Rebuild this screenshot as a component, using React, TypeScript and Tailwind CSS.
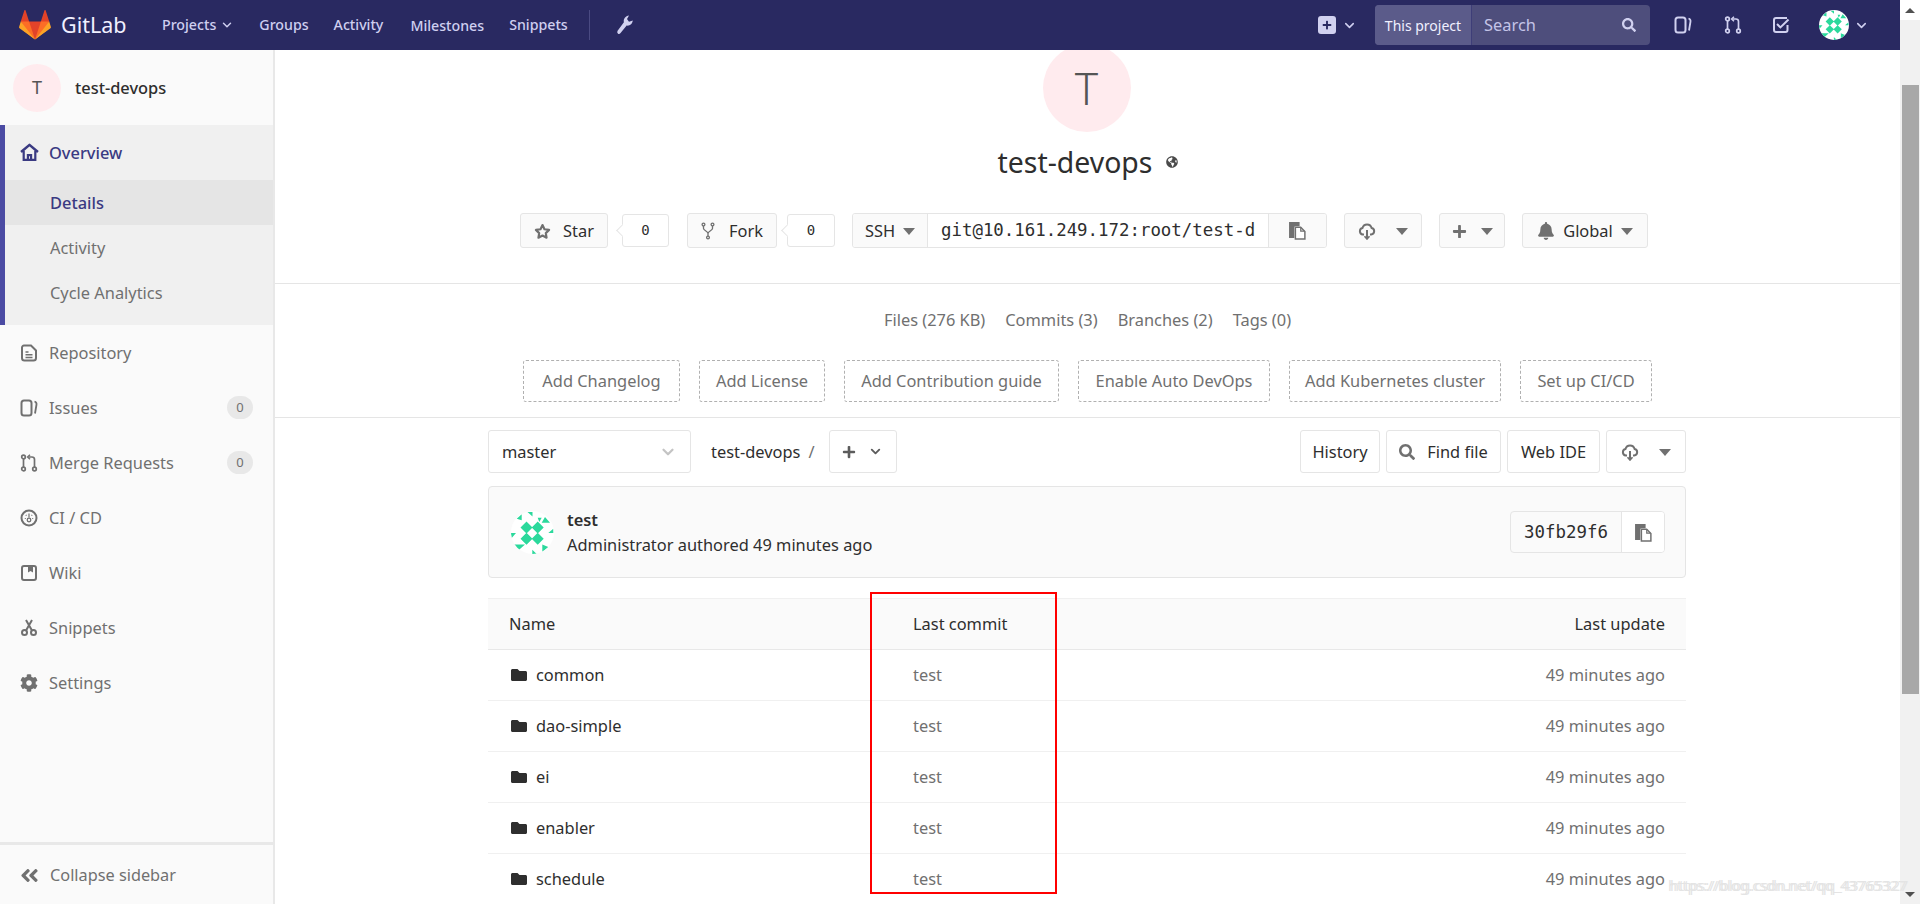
import { ReactNode } from 'react';
import { ChevronDown } from 'lucide-react';
import { FaAngleDoubleLeft, FaBell, FaCog, FaFolder, FaGlobeAmericas, FaPlus, FaSearch } from 'react-icons/fa';

const fontSans = "font-['Noto_Sans',sans-serif]";
const fontMono = "font-['DejaVu_Sans_Mono',monospace]";

const GitlabLogo = () => (
	<svg width="32" height="32" viewBox="0 0 36 36">
		<path fill="#e24329" d="m2 14 9.38 9v-9l-4-12.28c-.205-.632-1.176-.632-1.38 0z" />
		<path fill="#e24329" d="m34 14-9.38 9v-9l4-12.28c.205-.632 1.176-.632 1.38 0z" />
		<path fill="#e24329" d="M18 34.38 3 14h30z" />
		<path fill="#fc6d26" d="M18 34.38 11.38 14H2l4 11z" />
		<path fill="#fc6d26" d="M18 34.38 24.62 14H34l-4 11z" />
		<path fill="#fca326" d="M2 14 .1 20.16c-.18.565 0 1.2.5 1.56l17.42 12.66z" />
		<path fill="#fca326" d="m34 14 1.9 6.16c.18.565 0 1.2-.5 1.56L18 34.38z" />
	</svg>
);

const Identicon = ({ size }: { size: number }) => (
	<svg width={size} height={size} viewBox="0 0 43 43" className="shrink-0 rounded-full bg-white">
		<g fill="#2bd99c">
			<path d="M15.500 10.500l6 6-6 6-6-6zM26.700 10.500l6 6-6 6-6-6zM15.500 21.700l6 6-6 6-6-6zM26.700 21.700l6 6-6 6-6-6z" />
			<path d="M16.500 1h5v4.500zM5.700 7.700l5-4.400v6zM30.700 11.700 34 6l5 5.700zM26.700 6.700h4l-2.400 4.300zM37.300 22l5-4.300V22zM-.3 22H5l-4.300 5zM3 33.400h11l-6.700 6zM21.300 38.700V43h4.400zM31.300 33.400l6 2.600-6 5z" />
		</g>
	</svg>
);

const WrenchIcon = () => (
	<svg viewBox="0 0 18 18" width="20" height="20" fill="#d1d1f0">
		<path d="M3 17q-1.500-.8-.8-2.700L8 6.500C7.400 3.500 9.500.8 12.600.5L10.800 3.600 12.600 6l3.400-1c-.3 3-2.800 5-5.500 4.500L5 16.300Q4 17.500 3 17z" />
	</svg>
);

const IssuesIcon = ({ className }: { className?: string }) => (
	<svg viewBox="0 0 18 18" width="18" height="18" className={className} fill="none" stroke="currentColor" strokeWidth="2">
		<rect x="1.500" y="1.500" width="10" height="15" rx="2.500" />
		<path d="M14.500 2.500c2 .6 2.200 1.500 2 3l-1.500 9" strokeWidth="1.800" />
	</svg>
);

const MergeIcon = ({ className }: { className?: string }) => (
	<svg viewBox="0 0 18 18" width="18" height="18" className={className} fill="none" stroke="currentColor" strokeWidth="1.700">
		<circle cx="3.500" cy="3" r="1.800" />
		<circle cx="3.500" cy="15" r="1.800" />
		<circle cx="14.500" cy="15" r="1.800" />
		<path d="M3.500 5v8M14.500 13V5.500c0-1.500-1-2.500-2.500-2.500H9" />
		<path d="M10 .8 7.600 3 10 5.200" strokeWidth="1.500" />
	</svg>
);

const TodoIcon = () => (
	<svg viewBox="0 0 18 18" width="18" height="18" fill="none" stroke="currentColor" strokeWidth="2">
		<path d="M15.500 9v5a2 2 0 0 1-2 2H4a2 2 0 0 1-2-2V4a2 2 0 0 1 2-2h11" />
		<path d="M5 8l3.400 3.400L16.500 3.500" />
	</svg>
);

const RepoIcon = () => (
	<svg viewBox="0 0 18 18" width="18" height="18" fill="none" stroke="currentColor" strokeWidth="2">
		<path d="M4 1.500h7l5 5V14a2.500 2.500 0 0 1-2.500 2.500h-9A2.500 2.500 0 0 1 2 14V3.500a2 2 0 0 1 2-2z" />
		<path d="M5.500 8h3M5.500 10.800h7M5.500 13.500h7" strokeWidth="1.400" />
	</svg>
);

const CiIcon = () => (
	<svg viewBox="0 0 18 18" width="18" height="18" fill="none" stroke="currentColor">
		<circle cx="9" cy="9" r="7.500" strokeWidth="2" />
		<circle cx="9" cy="11" r="1.800" strokeWidth="1.300" />
		<path d="M9 4.500v4M4.800 9.500h1M12.200 9.500h1M5.800 6l.7.7M12.200 6l-.7.7" strokeWidth="1.200" />
	</svg>
);

const WikiIcon = () => (
	<svg viewBox="0 0 18 18" width="18" height="18">
		<path fill="none" stroke="currentColor" strokeWidth="2" d="M4 2h10a2 2 0 0 1 2 2v10a2 2 0 0 1-2 2H4a2 2 0 0 1-2-2V4a2 2 0 0 1 2-2z" />
		<path fill="currentColor" d="M8 2h5v6.500l-2.500-1.500L8 8.500z" />
	</svg>
);

const ScissorsIcon = () => (
	<svg viewBox="0 0 18 18" width="18" height="18" fill="none" stroke="currentColor" strokeWidth="2">
		<circle cx="4.500" cy="13.500" r="2.500" />
		<circle cx="13.500" cy="13.500" r="2.500" />
		<path d="M6 11.500 12 1M12 11.500 6 1" />
	</svg>
);

const HomeIcon = () => (
	<svg viewBox="0 0 18 18" width="19" height="19" fill="none" stroke="currentColor" strokeWidth="2.400">
		<path d="M1 8.500 9 1.800l8 6.700" strokeLinejoin="round" />
		<path d="M3.500 7.500V16h11V7.500M7.500 16v-4.500h3V16" strokeWidth="2.100" />
	</svg>
);

const CopyIcon = () => (
	<svg viewBox="0 0 18 18" width="19" height="19">
		<path fill="#707070" d="M1 1h10v4H7a1 1 0 0 0-1 1v10H1z" />
		<path fill="#fff" stroke="#707070" strokeWidth="1.400" d="M7 6h5l4 4v7H7z" />
		<path fill="#707070" d="M11.500 6h1.200v3h3v1.200h-4.200z" />
	</svg>
);

const CloudIcon = () => (
	<svg viewBox="0 0 18 18" width="18" height="18" fill="none" stroke="#707070" strokeWidth="2">
		<path d="M6 12.500H4.800A3.300 3.300 0 0 1 4.500 6 4.700 4.700 0 0 1 13.600 6a3.300 3.300 0 0 1-.4 6.500H12" />
		<path d="M9 8v8.500" />
		<path d="M6.500 14.200 9 17l2.500-2.800" strokeWidth="1.600" />
	</svg>
);

const StarIcon = () => (
	<svg viewBox="0 0 18 18" width="17" height="17" fill="none" stroke="#707070" strokeWidth="2.300" strokeLinejoin="round">
		<path d="M9 2.200l2.100 4.400 4.900.7-3.500 3.400.8 4.900L9 13.300l-4.300 2.300.8-4.900L2 7.300l4.900-.7z" />
	</svg>
);

const ForkIcon = () => (
	<svg viewBox="0 0 14 18" width="14" height="18" fill="none" stroke="#707070" strokeWidth="1.300">
		<circle cx="2.500" cy="2.500" r="1.400" />
		<circle cx="11.500" cy="2.500" r="1.400" />
		<circle cx="7" cy="15.500" r="1.400" />
		<path d="M2.500 4v2.500c0 2 4.500 2.500 4.500 5V14M11.500 4v2.500c0 2-4.500 2.500-4.500 5" />
	</svg>
);

const Caret = ({ className = '' }: { className?: string }) => (
	<span className={`inline-block h-0 w-0 border-x-[6px] border-t-[7px] border-x-transparent border-t-[#707070] ${className}`} />
);

const NavLink = ({ children }: { children: ReactNode }) => (
	<span className="text-[14.200px] font-medium text-[#cfcff0]">{children}</span>
);

const SideItem = ({ icon, label, badge }: { icon: ReactNode; label: string; badge?: string }) => (
	<div className="flex h-[55px] items-center pl-5 pr-5 text-[#707070]">
		<span className="flex w-[29px] shrink-0">{icon}</span>
		<span className="flex-1 pt-[2px] text-[16.400px]">{label}</span>
		{badge && (
			<span className="flex h-[23px] w-[26px] items-center justify-center rounded-full bg-[#e8e8e8] text-[13px]">
				{badge}
			</span>
		)}
	</div>
);

const Btn = ({ w, children, className = 'gap-2' }: { w: string; children: ReactNode; className?: string }) => (
	<div className={`flex h-[35px] items-center justify-center rounded-[3px] border border-[#e5e5e5] bg-[#fafafa] pt-px text-[16.400px] text-[#2e2e2e] ${w} ${className}`}>
		{children}
	</div>
);

const Count = ({ w }: { w: string }) => (
	<div className={`relative flex h-[33px] items-center justify-center rounded-[3px] border border-[#e5e5e5] bg-white text-[14px] font-medium text-[#2e2e2e] ${fontMono} ${w}`}>
		<span className="absolute left-[-5px] top-[11px] h-[9px] w-[9px] rotate-45 border-b border-l border-[#e5e5e5] bg-white" />
		0
	</div>
);

const DashedBtn = ({ w, label }: { w: string; label: string }) => (
	<div className={`flex h-[42px] items-center justify-center rounded-[3px] border border-dashed border-[#b0b0b0] text-[16.400px] text-[#707070] ${w}`}>
		{label}
	</div>
);

const TreeBtn = ({ w, children }: { w: string; children: ReactNode }) => (
	<div className={`flex h-[43px] items-center justify-center gap-3 rounded-[3px] border border-[#e5e5e5] bg-white pt-px text-[16.400px] text-[#2e2e2e] ${w}`}>
		{children}
	</div>
);

const files = ['common', 'dao-simple', 'ei', 'enabler', 'schedule'];

export default function App() {
	return (
		<div className={`relative flex h-screen overflow-hidden bg-white ${fontSans}`}>
			<div className="flex min-w-0 flex-1 flex-col">
				<header className="z-10 flex h-[50px] shrink-0 items-center bg-[#292961]">
					<div className="ml-[19px] flex w-[143px] items-center gap-[10px]">
						<GitlabLogo />
						<span className="text-[21.500px] text-[#f0f0ff]">GitLab</span>
					</div>
					<div className="flex items-center gap-[25px]">
						<span className="flex items-center gap-[4px]">
							<NavLink>Projects</NavLink>
							<ChevronDown size={14} strokeWidth={2.500} className="text-[#cfcff0]" />
						</span>
						<NavLink>Groups</NavLink>
						<NavLink>Activity</NavLink>
						<span className="ml-[2px]"><NavLink>Milestones</NavLink></span>
						<NavLink>Snippets</NavLink>
					</div>
					<span className="ml-[21px] h-[30px] w-px bg-[#4a4a82]" />
					<span className="ml-[25px]"><WrenchIcon /></span>
					<div className="ml-auto flex items-center">
						<span className="flex h-[18px] w-[18px] items-center justify-center rounded-[3px] bg-[#d1d1f0]">
							<FaPlus className="h-[10px] w-[10px] text-[#292961]" />
						</span>
						<ChevronDown size={15} strokeWidth={2.500} className="ml-[6px] text-[#cfcff0]" />
						<div className="ml-[18px] flex h-[40px] w-[275px] overflow-hidden rounded-[4px] bg-[#4e4e7c]">
							<span className="flex w-[97px] items-center justify-center border-r border-[#3e3e78] bg-[#5b5b8a] text-[14px] text-[#f0f0ff]">
								This project
							</span>
							<span className="flex flex-1 items-center justify-between pl-3 pr-[14px] text-[16.400px] text-[#c4c4e8]">
								Search
								<FaSearch className="h-[14px] w-[14px] text-[#d1d1f0]" />
							</span>
						</div>
						<IssuesIcon className="ml-[24px] text-[#d1d1f0]" />
						<MergeIcon className="ml-[32px] text-[#d1d1f0]" />
						<span className="ml-[30px] text-[#d1d1f0]"><TodoIcon /></span>
						<span className="ml-[29px]"><Identicon size={30} /></span>
						<ChevronDown size={15} strokeWidth={2.500} className="ml-[5px] text-[#cfcff0]" />
						<span className="w-[31px]" />
					</div>
				</header>
				<div className="flex min-h-0 flex-1">
					<aside className="flex w-[275px] shrink-0 flex-col border-r-2 border-[#e8e8e8] bg-[#fafafa]">
						<div className="flex h-[75px] items-center pl-[13px]">
							<span className="flex h-[48px] w-[48px] items-center justify-center rounded-full bg-[#ffebee] text-[18px] text-[#555]">T</span>
							<span className="ml-[14px] pt-[2px] text-[16.400px] font-medium text-[#2e2e2e]">test-devops</span>
						</div>
						<div className="h-[200px] border-l-[5px] border-[#4b4ba3] bg-[#f0f0f0]">
							<div className="flex h-[55px] items-center pl-[15px] text-[16.400px] font-medium text-[#3a3a82]">
								<span className="flex w-[29px]"><HomeIcon /></span>
								<span className="pt-[2px]">Overview</span>
							</div>
							<div className="flex h-[45px] items-center bg-[#e5e5e5] pl-[45px] pt-[2px] text-[16.400px] font-medium text-[#3a3a82]">Details</div>
							<div className="flex h-[45px] items-center pl-[45px] pt-[2px] text-[16.400px] text-[#707070]">Activity</div>
							<div className="flex h-[45px] items-center pl-[45px] pt-[2px] text-[16.400px] text-[#707070]">Cycle Analytics</div>
						</div>
						<SideItem icon={<RepoIcon />} label="Repository" />
						<SideItem icon={<IssuesIcon />} label="Issues" badge="0" />
						<SideItem icon={<MergeIcon />} label="Merge Requests" badge="0" />
						<SideItem icon={<CiIcon />} label="CI / CD" />
						<SideItem icon={<WikiIcon />} label="Wiki" />
						<SideItem icon={<ScissorsIcon />} label="Snippets" />
						<SideItem icon={<FaCog className="h-[18px] w-[18px]" />} label="Settings" />
						<div className="mt-auto flex h-[62px] items-center border-t-[3px] border-[#e8e8e8] pl-[19px] pt-[2px] text-[16.300px] text-[#707070]">
							<FaAngleDoubleLeft className="mr-[10px] h-[21px] w-[21px]" />
							Collapse sidebar
						</div>
					</aside>
					<main className="relative min-w-0 flex-1 overflow-hidden">
						<div className="-mt-[6px] flex flex-col items-center border-b border-[#e5e5e5] pb-[35px]">
							<div className="mr-[2px] flex h-[88px] w-[88px] items-center justify-center rounded-full bg-[#ffebee] text-[44px] font-light text-[#555]">T</div>
							<div className="ml-[1px] mt-[10px] flex h-[40px] items-center gap-[14px] text-[28.400px] text-[#2e2e2e]">
								test-devops
								<FaGlobeAmericas className="h-[12px] w-[12px] text-[#4a4a4a]" />
							</div>
							<div className="mr-[7px] mt-[31px] flex items-center">
								<Btn w="w-[88px]" className="gap-[12px]"><StarIcon />Star</Btn>
								<Count w="ml-[14px] w-[47px]" />
								<Btn w="ml-[18px] w-[90px]" className="gap-[14px]"><ForkIcon />Fork</Btn>
								<Count w="ml-[10px] w-[48px]" />
								<div className="ml-[17px] flex h-[35px] w-[475px] overflow-hidden rounded-[3px] border border-[#e5e5e5]">
									<span className="flex w-[75px] items-center justify-center gap-2 border-r border-[#e5e5e5] bg-[#fafafa] pt-px text-[16.400px] text-[#2e2e2e]">SSH<Caret /></span>
									<span className={`flex-1 pl-[13px] text-[17.400px] leading-[33px] text-[#2e2e2e] ${fontMono}`}>git@10.161.249.172:root/test-d</span>
									<span className="flex w-[58px] items-center justify-center border-l border-[#e5e5e5] bg-[#fafafa]"><CopyIcon /></span>
								</div>
								<Btn w="ml-[17px] w-[78px]" className="gap-[20px]"><CloudIcon /><Caret /></Btn>
								<Btn w="ml-[17px] w-[66px]" className="gap-[14px]"><FaPlus className="h-[15px] w-[15px] text-[#707070]" /><Caret /></Btn>
								<Btn w="ml-[17px] w-[126px]"><FaBell className="h-[18px] w-[18px] text-[#707070]" />Global<Caret /></Btn>
							</div>
						</div>
						<div className="flex flex-col items-center border-b border-[#e5e5e5]">
							<div className="mt-[25px] flex h-[22px] items-center gap-[20px] text-[16.400px] text-[#707070]">
								<span>Files (276 KB)</span>
								<span>Commits (3)</span>
								<span>Branches (2)</span>
								<span>Tags (0)</span>
							</div>
							<div className="mb-[15px] mt-[29px] flex gap-[19px]">
								<DashedBtn w="w-[157px]" label="Add Changelog" />
								<DashedBtn w="w-[126px]" label="Add License" />
								<DashedBtn w="w-[215px]" label="Add Contribution guide" />
								<DashedBtn w="w-[192px]" label="Enable Auto DevOps" />
								<DashedBtn w="w-[212px]" label="Add Kubernetes cluster" />
								<DashedBtn w="w-[132px]" label="Set up CI/CD" />
							</div>
						</div>
						<div className="ml-[213px] w-[1198px]">
							<div className="mt-[12px] flex items-center">
								<div className="flex h-[43px] w-[203px] items-center justify-between rounded-[3px] border border-[#e5e5e5] px-[13px] pt-px text-[16.400px] text-[#2e2e2e]">
									master
									<ChevronDown size={18} strokeWidth={3} className="text-[#c4c4c4]" />
								</div>
								<span className="ml-[20px] pt-px text-[16.400px] text-[#2e2e2e]">test-devops</span>
								<span className="ml-[8px] pt-px text-[16.400px] text-[#707070]">/</span>
								<div className="ml-[14px] flex h-[43px] w-[68px] items-center justify-center gap-[12px] rounded-[3px] border border-[#e5e5e5]">
									<FaPlus className="h-[14px] w-[14px] text-[#5c5c5c]" />
									<ChevronDown size={15} strokeWidth={3} className="text-[#5c5c5c]" />
								</div>
								<div className="ml-auto flex gap-[6px]">
									<TreeBtn w="w-[80px]">History</TreeBtn>
									<TreeBtn w="w-[115px]"><FaSearch className="h-[16px] w-[16px] text-[#707070]" />Find file</TreeBtn>
									<TreeBtn w="w-[93px]">Web IDE</TreeBtn>
									<TreeBtn w="w-[80px]"><CloudIcon /><Caret className="ml-2" /></TreeBtn>
								</div>
							</div>
							<div className="mt-[13px] flex h-[92px] items-center rounded-[4px] border border-[#e5e5e5] bg-[#fafafa] pl-[22px] pr-[20px]">
								<Identicon size={43} />
								<div className="ml-[13px] pt-px">
									<div className="text-[16.400px] font-semibold leading-[24px] text-[#2e2e2e]">test</div>
									<div className="text-[16.400px] leading-[26px] text-[#2e2e2e]">Administrator authored 49 minutes ago</div>
								</div>
								<div className="ml-auto flex h-[42px] w-[155px] overflow-hidden rounded-[4px] border border-[#e5e5e5]">
									<span className={`flex w-[111px] items-center justify-center border-r border-[#e5e5e5] text-[17.400px] text-[#2e2e2e] ${fontMono}`}>30fb29f6</span>
									<span className="flex flex-1 items-center justify-center bg-white"><CopyIcon /></span>
								</div>
							</div>
							<div className="mt-[20px] border-t border-[#f0f0f0]">
								<div className="flex h-[51px] items-center border-b border-[#e8e8e8] bg-[#fafafa] px-[21px] text-[16.400px] text-[#2e2e2e]">
									<span className="w-[404px]">Name</span>
									<span>Last commit</span>
									<span className="ml-auto">Last update</span>
								</div>
								{files.map((name) => (
									<div key={name} className="flex h-[51px] items-center border-b border-[#f0f0f0] px-[21px] pt-px text-[16.400px]">
										<span className="flex w-[404px] items-center text-[#2e2e2e]">
											<FaFolder className="ml-[2px] mr-[9px] h-[16px] w-[16px] text-[#2e2e2e]" />
											{name}
										</span>
										<span className="text-[#707070]">test</span>
										<span className="ml-auto text-[#707070]">49 minutes ago</span>
									</div>
								))}
							</div>
						</div>
						{/* red annotation drawn over the table in the screenshot */}
						<div className="absolute left-[595px] top-[542px] h-[302px] w-[187px] border-2 border-[#ff0000]" />
					</main>
				</div>
			</div>
			<div className="flex w-[20px] shrink-0 flex-col items-center bg-[#f1f1f1]">
				<div className="flex h-[20px] w-full items-center justify-center bg-white">
					<span className="h-0 w-0 border-x-[5px] border-b-[5px] border-x-transparent border-b-[#505050]" />
				</div>
				<div className="mt-[65px] h-[609px] w-[17px] bg-[#a8a8a8]" />
				<div className="mt-auto flex h-[20px] items-center justify-center">
					<span className="h-0 w-0 border-x-[5px] border-t-[5px] border-x-transparent border-t-[#505050]" />
				</div>
			</div>
			{/* csdn watermark, lies over the page and the scrollbar */}
			<div className="absolute left-[1668px] top-[875px] whitespace-nowrap text-[14.500px] text-[#e4e4e4] [text-shadow:2px_0_0_#e4e4e4]">
				https://blog.csdn.net/qq_43765327
			</div>
		</div>
	);
}
